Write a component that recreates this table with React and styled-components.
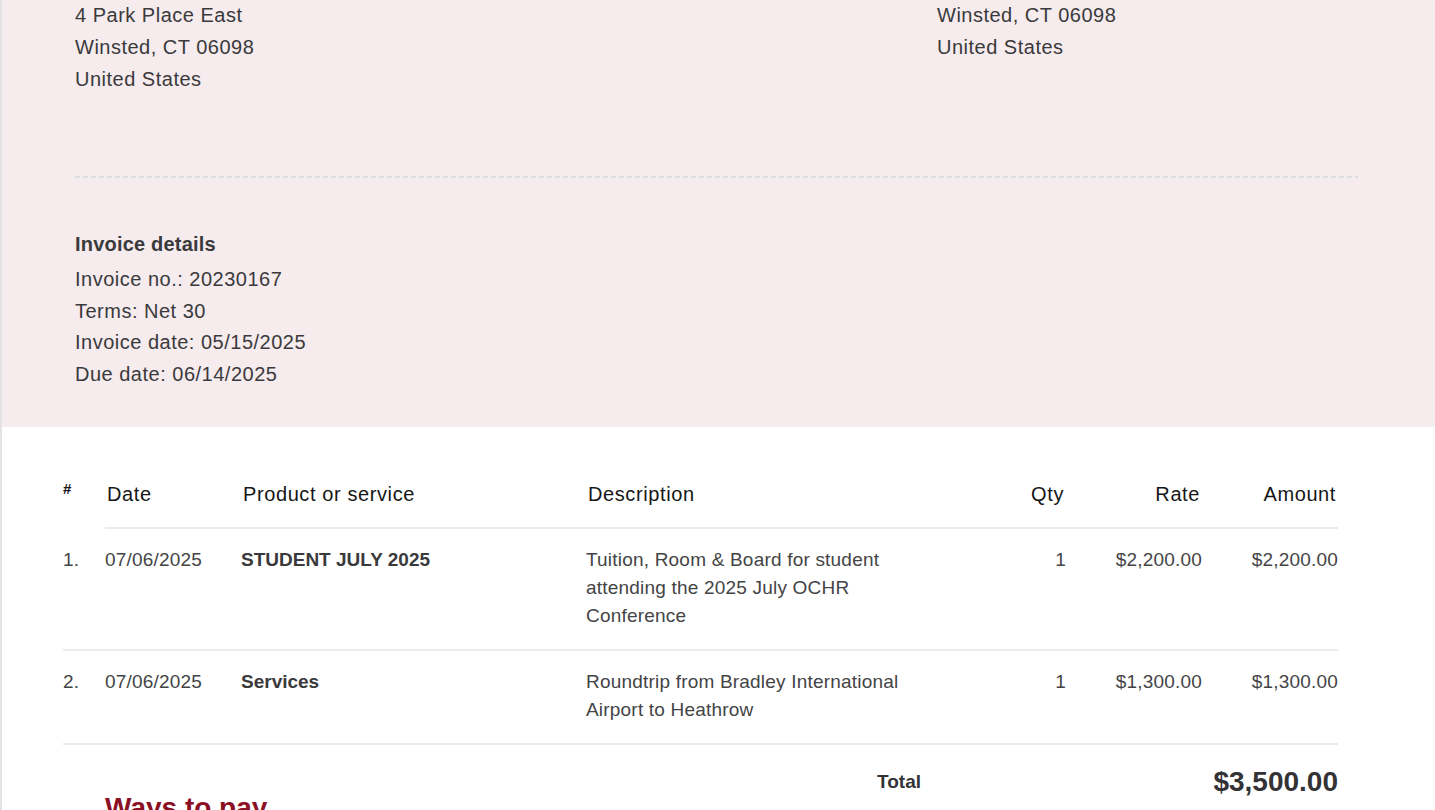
import styled, { createGlobalStyle } from "styled-components";

// invoice page, scrolled to the address / details part

const GlobalStyle = createGlobalStyle`
  html {
    overflow: hidden;
  }
  body {
    margin: 0;
    background: #ffffff;
    font-family: "Liberation Sans", Arial, Helvetica, sans-serif;
    color: #3a3a3c;
  }
`;

// whole sheet, shifted up as the page is scrolled
const Sheet = styled.div`
  margin-top: -143px;
  border-left: 2px solid #e4e2e3;
  min-height: 1100px;
`;

// pink head panel
const Panel = styled.section`
  background: #f6ebed;
  padding: 40px 77px 36px 73px;
`;

const Addresses = styled.div`
  display: grid;
  grid-template-columns: 862px 1fr;
`;

const Block = styled.div`
  font-size: 20px;
  line-height: ${({ $tight }) => ($tight ? "31.7px" : "32px")};
  letter-spacing: 0.5px;
`;

const Heading = styled.div`
  font-weight: bold;
  line-height: 36px;
  margin-bottom: 2px;
  letter-spacing: 0.2px;
`;

const Dashed = styled.div`
  height: 2px;
  margin: 81px 0 48px;
  background: repeating-linear-gradient(
    to right,
    #d9dce0 0 5px,
    transparent 5px 8px
  );
`;

// items table
const Table = styled.div`
  margin: 53px 97px 0 61px;
`;

const Row = styled.div`
  display: grid;
  grid-template-columns: 42px 136px 345px 346px 134px 136px 136px;
  border-bottom: ${({ $head }) => ($head ? "none" : "2px solid #ebebeb")};
`;

const HeadCell = styled.div`
  font-size: 20px;
  line-height: 28px;
  letter-spacing: 0.6px;
  color: #161616;
  padding: 0 ${({ $right }) => ($right ? "2px" : "0")} 19px
    ${({ $right }) => ($right ? "0" : "2px")};
  text-align: ${({ $right }) => ($right ? "right" : "left")};
  border-bottom: ${({ $plain }) => ($plain ? "none" : "2px solid #ebebeb")};
`;

const Hash = styled(HeadCell)`
  font-size: 15px;
  line-height: 18px;
  font-weight: bold;
  padding: 0;
`;

const Cell = styled.div`
  font-size: 19px;
  line-height: 28px;
  letter-spacing: ${({ $bold }) => ($bold ? "0" : "0.2px")};
  font-weight: ${({ $bold }) => ($bold ? "bold" : "normal")};
  color: ${({ $bold }) => ($bold ? "#3a3a3c" : "#444446")};
  text-align: ${({ $right }) => ($right ? "right" : "left")};
  padding: 17px ${({ $wrap }) => ($wrap ? "10px" : "0")} 19px 0;
`;

const Footer = styled.div`
  display: grid;
  grid-template-columns: 1fr 461px;
  align-items: start;
  padding-left: 42px;
`;

const PayTitle = styled.h2`
  margin: 46px 0 0;
  font-size: 28px;
  line-height: 34px;
  font-weight: bold;
  color: #8c1024;
`;

const Totals = styled.div`
  display: flex;
  justify-content: space-between;
  align-items: center;
  padding-top: 17px;
  line-height: 40px;
  color: #333335;
`;

const TotalLabel = styled.span`
  font-size: 19px;
  font-weight: bold;
`;

const TotalValue = styled.span`
  font-size: 28px;
  font-weight: bold;
`;

const items = [
  {
    date: "07/06/2025",
    product: "STUDENT JULY 2025",
    desc: "Tuition, Room & Board for student attending the 2025 July OCHR Conference",
    qty: 1,
    rate: "$2,200.00",
    amount: "$2,200.00",
  },
  {
    date: "07/06/2025",
    product: "Services",
    desc: "Roundtrip from Bradley International Airport to Heathrow",
    qty: 1,
    rate: "$1,300.00",
    amount: "$1,300.00",
  },
];

export default function App() {
  return (
    <>
      <GlobalStyle />
      <Sheet>
        <Panel>
          <Addresses>
            <Block>
              <Heading>Bill to</Heading>
              <div>Oxford Center for Hispanic Research</div>
              <div>The Frederick Gunn School</div>
              <div>4 Park Place East</div>
              <div>Winsted, CT 06098</div>
              <div>United States</div>
            </Block>
            <Block>
              <Heading>Ship to</Heading>
              <div>The Frederick Gunn School</div>
              <div>4 Park Place East</div>
              <div>Winsted, CT 06098</div>
              <div>United States</div>
            </Block>
          </Addresses>
          <Dashed />
          <Block $tight>
            <Heading>Invoice details</Heading>
            <div>Invoice no.: 20230167</div>
            <div>Terms: Net 30</div>
            <div>Invoice date: 05/15/2025</div>
            <div>Due date: 06/14/2025</div>
          </Block>
        </Panel>

        <Table>
          <Row $head>
            <Hash $plain>#</Hash>
            <HeadCell>Date</HeadCell>
            <HeadCell>Product or service</HeadCell>
            <HeadCell>Description</HeadCell>
            <HeadCell $right>Qty</HeadCell>
            <HeadCell $right>Rate</HeadCell>
            <HeadCell $right>Amount</HeadCell>
          </Row>
          {items.map((item, i) => (
            <Row key={i}>
              <Cell>{i + 1}.</Cell>
              <Cell>{item.date}</Cell>
              <Cell $bold>{item.product}</Cell>
              <Cell $wrap>{item.desc}</Cell>
              <Cell $right>{item.qty}</Cell>
              <Cell $right>{item.rate}</Cell>
              <Cell $right>{item.amount}</Cell>
            </Row>
          ))}
          <Footer>
            <PayTitle>Ways to pay</PayTitle>
            <Totals>
              <TotalLabel>Total</TotalLabel>
              <TotalValue>$3,500.00</TotalValue>
            </Totals>
          </Footer>
        </Table>
      </Sheet>
    </>
  );
}
